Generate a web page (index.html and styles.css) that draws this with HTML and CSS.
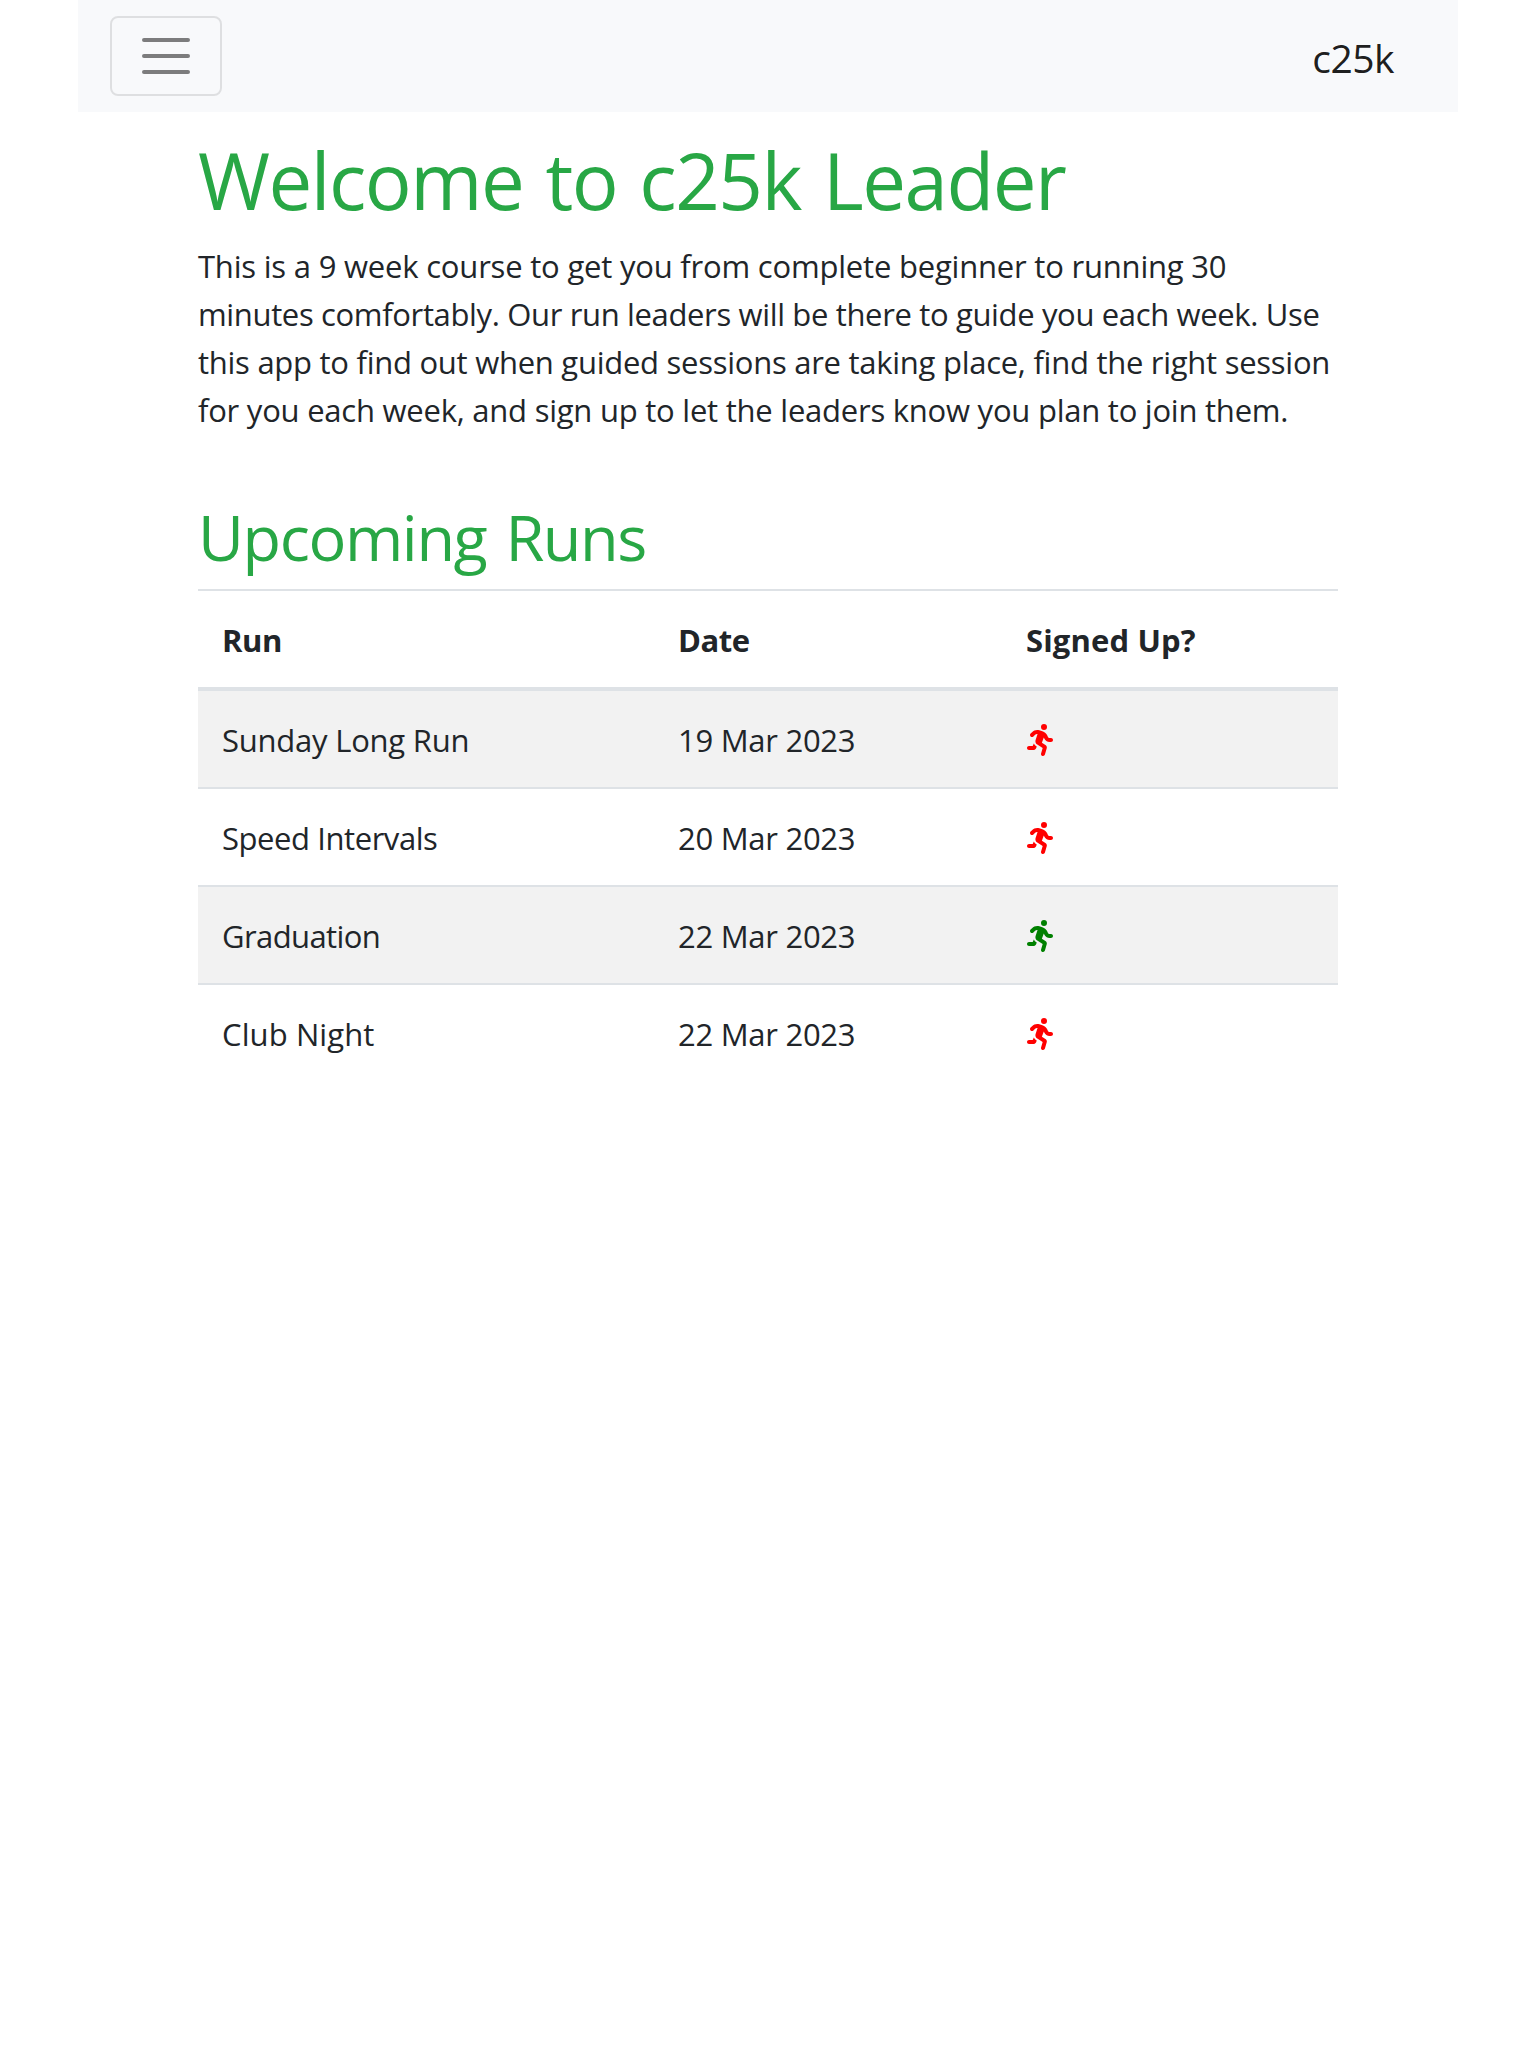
FILE: index.html
```html
<!DOCTYPE html>
<html lang="en">
<head>
<meta charset="utf-8">
<title>c25k Leader</title>
<link rel="stylesheet" href="styles.css">
</head>
<body>
<svg class="sprite" aria-hidden="true">
  <symbol id="runner" viewBox="0 0 448 512"><path d="M320 48A48 48 0 1 0 224 48a48 48 0 1 0 96 0zM125.7 175.5c9.9-9.9 23.4-15.5 37.5-15.5c1.9 0 3.8 .1 5.6 .3L137.6 254c-9.3 28 1.7 58.8 26.8 74.5l86.2 53.9-25.4 88.8c-4.9 17 5 34.7 22 39.6s34.7-5 39.6-22l28.7-100.4c5.9-20.6-2.6-42.6-20.7-53.9L238 299l30.9-82.4 5.1 12.3C289 264.7 323.9 288 362.7 288H384c17.7 0 32-14.3 32-32s-14.3-32-32-32H362.7c-12.9 0-24.6-7.8-29.5-19.7l-6.3-15c-14.6-35.1-44.1-61.9-80.5-73.1l-48.7-15c-11.1-3.4-22.7-5.2-34.4-5.2c-31 0-60.8 12.3-82.7 34.3L57.4 153.4c-12.5 12.5-12.5 32.8 0 45.3s32.8 12.5 45.3 0l23.1-23.1zM91.2 352H32c-17.7 0-32 14.3-32 32s14.3 32 32 32h69.6c19 0 36.2-11.2 43.9-28.5L157 361.6l-9.5-6c-17.5-10.9-30.5-26.8-37.9-44.9L91.2 352z"/></symbol>
</svg>
<div class="page">
  <nav class="navbar">
    <button class="toggler" type="button" aria-label="Toggle navigation">
      <svg class="toggler-icon" viewBox="0 0 30 30"><path d="M4 7h22M4 15h22M4 23h22"/></svg>
    </button>
    <a class="brand">c25k</a>
  </nav>
  <main class="content">
    <h1 class="title">Welcome to c25k Leader</h1>
    <p class="intro">
      <span class="line line-1">This is a 9 week course to get you from complete beginner to running 30</span>
      <span class="line line-2">minutes comfortably. Our run leaders will be there to guide you each week. Use</span>
      <span class="line line-3">this app to find out when guided sessions are taking place, find the right session</span>
      <span class="line line-4">for you each week, and sign up to let the leaders know you plan to join them.</span>
    </p>
    <h2 class="subtitle">Upcoming Runs</h2>
    <table class="runs">
      <thead>
        <tr><th class="col-run">Run</th><th class="col-date">Date</th><th class="col-signed">Signed Up?</th></tr>
      </thead>
      <tbody>
        <tr><td class="long-run">Sunday Long Run</td><td class="date">19 Mar 2023</td><td><svg class="runner no"><use href="#runner"/></svg></td></tr>
        <tr><td class="intervals">Speed Intervals</td><td class="date">20 Mar 2023</td><td><svg class="runner no"><use href="#runner"/></svg></td></tr>
        <tr><td class="graduation">Graduation</td><td class="date">22 Mar 2023</td><td><svg class="runner yes"><use href="#runner"/></svg></td></tr>
        <tr><td class="club-night">Club Night</td><td class="date">22 Mar 2023</td><td><svg class="runner no"><use href="#runner"/></svg></td></tr>
      </tbody>
    </table>
  </main>
</div>
</body>
</html>
```
FILE: styles.css
```css
* { box-sizing: border-box; }
body {
  margin: 0;
  background: #fff;
  color: #212529;
  font: 400 31px/48px "Open Sans", "Noto Sans", sans-serif;
}
.sprite { display: none; }
.page { width: 1380px; margin: 0 auto; }
.navbar {
  display: flex;
  align-items: center;
  justify-content: space-between;
  height: 112px;
  padding: 0 64px 0 32px;
  background: #f8f9fb;
}
.toggler {
  width: 112px;
  height: 80px;
  padding: 8px 24px;
  border: 2px solid rgba(0, 0, 0, .1);
  border-radius: 8px;
  background: transparent;
}
.toggler-icon {
  display: block;
  width: 60px;
  height: 60px;
  fill: none;
  stroke: rgba(0, 0, 0, .5);
  stroke-width: 2;
  stroke-linecap: round;
}
.brand { padding-top: 3px; font-size: 39px; line-height: 60px; letter-spacing: -.5px; color: rgba(0, 0, 0, .9); }
.content { padding: 20px 120px 0; }
.title, .subtitle { font-weight: 400; color: #28a745; white-space: nowrap; }
.title { margin: 0 0 14px; font-size: 78px; line-height: 96px; letter-spacing: -1.5px; word-spacing: 3.4px; }
.intro { margin: 0 0 64px; }
.line { display: block; white-space: nowrap; font-variant-ligatures: common-ligatures; }
.line-1 { letter-spacing: -.2px; }
.line-2 { letter-spacing: -.35px; }
.line-3 { letter-spacing: -.265px; }
.line-4 { letter-spacing: -.235px; }
.subtitle { margin: 0 0 14px; font-size: 63px; line-height: 77px; letter-spacing: -1.4px; word-spacing: 4px; }
.runs { width: 1140px; table-layout: fixed; border-spacing: 0; }
.runs th, .runs td { padding: 25px 24px 23px; border-top: 2px solid #dee2e6; text-align: left; white-space: nowrap; }
.runs th { border-bottom: 4px solid #dee2e6; font-weight: 700; }
.runs tbody tr:first-child td { border-top: 0; }
.runs tbody tr:nth-child(odd) { background: #f2f2f2; }
.runs td { height: 98px; }
.runs tbody tr:first-child td { height: 96px; }
.runs .col-run { width: 457px; letter-spacing: -.4px; }
.runs .col-date { width: 347px; padding-left: 23px; letter-spacing: -.5px; }
.runs .col-signed { width: 336px; letter-spacing: .15px; }
.runs .date { padding-left: 23px; letter-spacing: -.27px; }
.long-run { letter-spacing: -.23px; }
.intervals { letter-spacing: -.43px; }
.graduation { letter-spacing: -.6px; }
.club-night { letter-spacing: .1px; }
.runner { display: block; width: 28px; height: 32px; margin-left: .5px; }
.no { fill: red; }
.yes { fill: green; }
```
